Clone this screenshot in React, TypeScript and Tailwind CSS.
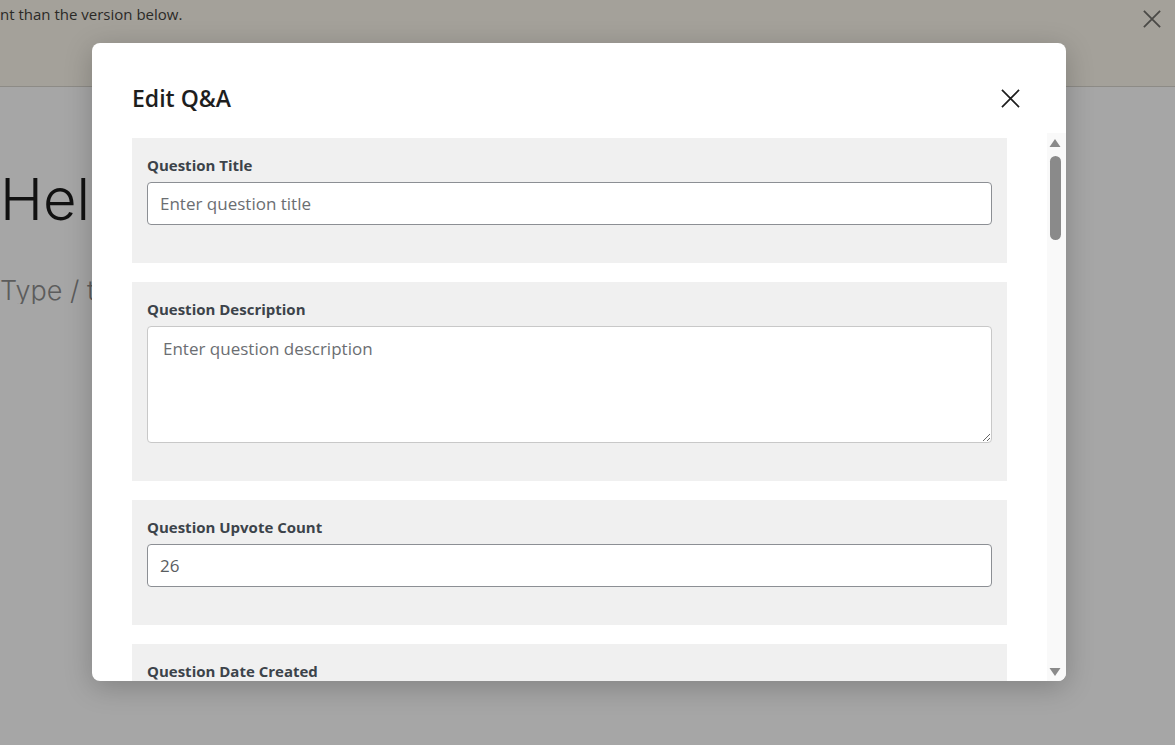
import React from 'react'

const sans = "font-['Open_Sans','Liberation_Sans',sans-serif]"

function Field({ label, children, last }: { label: string; children?: React.ReactNode; last?: boolean }) {
  return (
    <div className={`bg-[#f0f0f0] px-[15px] pt-[17px] ${last ? 'pb-[60px]' : 'pb-[38px]'}`}>
      <label className="block text-[15px] leading-[20px] font-bold text-[#3c434a]">{label}</label>
      {children}
    </div>
  )
}

function CloseIcon({ size, color, stroke }: { size: number; color: string; stroke: number }) {
  return (
    <svg width={size} height={size} viewBox="0 0 20 20" fill="none">
      <path d="M1 1 L19 19 M19 1 L1 19" stroke={color} strokeWidth={stroke} />
    </svg>
  )
}

export default function App() {
  return (
    <div className={`relative h-[745px] w-full overflow-hidden bg-[#a6a6a6] ${sans}`}>
      {/* notice bar behind the overlay */}
      <div className="h-[87px] border-b border-[#8d8b86] bg-[#a4a19a] flex justify-between">
        <p className="pt-[3px] text-[15px] leading-[22px] text-[#2b2a27]">nt than the version below.</p>
        <button className="mt-[10px] mr-[14px] h-[18px]">
          <CloseIcon size={18} color="#4a4946" stroke={2} />
        </button>
      </div>

      {/* editor canvas, mostly hidden by the modal */}
      <div className="w-[92px] overflow-hidden whitespace-nowrap font-['Inter',sans-serif] font-light">
        <h1 className="mt-[83px] text-[58px] leading-none text-[#111]">Hello world</h1>
        <p className="mt-[49px] text-[27px] leading-none text-[#5c5c5c]">Type / to choose a block</p>
      </div>

      {/* modal */}
      <div className="absolute left-[92px] top-[43px] w-[974px] h-[638px] bg-white rounded-[8px] overflow-hidden flex flex-col shadow-[0_6px_28px_rgba(0,0,0,0.22)]">
        <div className="flex items-start justify-between pl-[40px] pr-[46px] pt-[40px] pb-[19px]">
          <h2 className="text-[23px] leading-[31px] font-semibold text-[#1e1e1e]">Edit Q&amp;A</h2>
          <button className="mt-[6px]">
            <CloseIcon size={19} color="#1e1e1e" stroke={1.8} />
          </button>
        </div>

        <div className="flex flex-1 min-h-0">
          <div className="flex-1 min-h-0 overflow-hidden pl-[40px] pr-[40px] pt-[5px]">
            <div className="flex flex-col gap-[19px]">
              <Field label="Question Title">
                <input
                  placeholder="Enter question title"
                  className="mt-[7px] block w-full h-[43px] rounded-[4px] border border-[#8c8f94] bg-white px-[12px] text-[17px] text-[#1e1e1e] placeholder:text-[#6b6e72] outline-none"
                />
              </Field>
              <Field label="Question Description">
                <textarea
                  placeholder="Enter question description"
                  className="mt-[7px] block w-full h-[117px] rounded-[4px] border border-[#c8c8c8] bg-white px-[15px] py-[10px] text-[17px] leading-[24px] text-[#1e1e1e] placeholder:text-[#6b6e72] outline-none"
                />
              </Field>
              <Field label="Question Upvote Count">
                <input
                  defaultValue="26"
                  className="mt-[7px] block w-full h-[43px] rounded-[4px] border border-[#8c8f94] bg-white px-[12px] text-[17px] text-[#5a5d61] outline-none"
                />
              </Field>
              <Field label="Question Date Created" last />
            </div>
          </div>

          {/* scrollbar */}
          <div className="w-[19px] bg-[#f9f9f9] flex flex-col items-center pr-[3px] pt-[5px] pb-[4px]">
            <svg width="12" height="10" viewBox="0 0 12 10"><path d="M6 1 L11.5 9 L0.5 9 Z" fill="#8a8a8a" /></svg>
            <div className="mt-[8px] w-[11px] h-[84px] rounded-full bg-[#8a8a8a]" />
            <div className="flex-1" />
            <svg width="12" height="10" viewBox="0 0 12 10"><path d="M0.5 1 L11.5 1 L6 9 Z" fill="#8a8a8a" /></svg>
          </div>
        </div>
      </div>
    </div>
  )
}
